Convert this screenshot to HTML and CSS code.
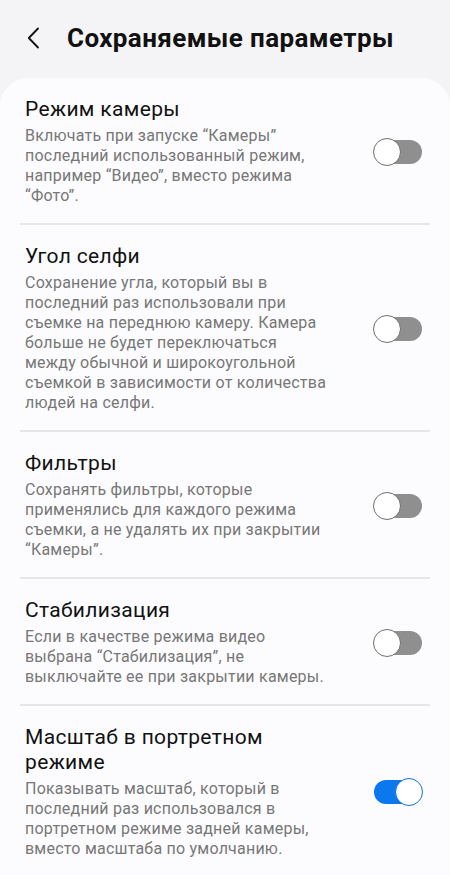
FILE: index.html
```html
<!DOCTYPE html>
<html lang="ru">
<head>
<meta charset="utf-8">
<link rel="stylesheet" href="styles.css">
</head>
<body>
<header class="topbar">
  <svg class="back" width="16" height="24" viewBox="0 0 16 24"><path d="M12 2.5 L2.8 12 L12 21.5" fill="none" stroke="#111" stroke-width="1.8" stroke-linecap="round" stroke-linejoin="round"/></svg>
  <h1 class="title">Сохраняемые параметры</h1>
</header>
<main class="card">
  <div class="item">
    <div class="text">
      <div class="name">Режим камеры</div>
      <div class="desc">Включать при запуске “Камеры” последний использованный режим, например “Видео”, вместо режима “Фото”.</div>
    </div>
    <span class="switch"><span class="thumb"></span></span>
  </div>
  <div class="item">
    <div class="text">
      <div class="name">Угол селфи</div>
      <div class="desc">Сохранение угла, который вы в последний раз использовали при съемке на переднюю камеру. Камера больше не будет переключаться<br>между обычной и широкоугольной съемкой в зависимости от количества людей на селфи.</div>
    </div>
    <span class="switch"><span class="thumb"></span></span>
  </div>
  <div class="item">
    <div class="text">
      <div class="name">Фильтры</div>
      <div class="desc">Сохранять фильтры, которые применялись для каждого режима съемки, а не удалять их при закрытии “Камеры”.</div>
    </div>
    <span class="switch"><span class="thumb"></span></span>
  </div>
  <div class="item">
    <div class="text">
      <div class="name">Стабилизация</div>
      <div class="desc">Если в качестве режима видео выбрана “Стабилизация”, не выключайте ее при закрытии камеры.</div>
    </div>
    <span class="switch"><span class="thumb"></span></span>
  </div>
  <div class="item">
    <div class="text">
      <div class="name">Масштаб в портретном режиме</div>
      <div class="desc">Показывать масштаб, который в последний раз использовался в портретном режиме задней камеры, вместо масштаба по умолчанию.</div>
    </div>
    <span class="switch on"><span class="thumb"></span></span>
  </div>
</main>
</body>
</html>
```
FILE: styles.css
```css
* { box-sizing: border-box; }
html, body { margin: 0; padding: 0; }
body {
  background: #f4f3f5;
  font-family: Roboto, "Noto Sans", sans-serif;
  color: #111;
  width: 450px;
  height: 875px;
  overflow: hidden;
}
.topbar {
  height: 78px;
  display: flex;
  align-items: center;
  padding: 0 0 2px 26px;
}
.back { flex: none; }
.title {
  margin: 0 0 0 25px;
  font-size: 26px;
  font-weight: 700;
  letter-spacing: 0.4px;
  color: #111;
}
.card {
  background: #fcfcfe;
  border-radius: 28px 28px 0 0;
  padding: 0 20px;
  min-height: 797px;
}
.item {
  display: flex;
  align-items: center;
  padding: 19px 0 17px 5px;
  border-bottom: 2px solid #e6e6e8;
}
.item:last-child { border-bottom: none; }
.text { flex: 1; max-width: 312px; }
.name {
  font-size: 21px;
  line-height: 25px;
  letter-spacing: 0.35px;
  color: #111;
}
.item:last-child .name { max-width: 260px; }
.desc {
  margin-top: 4px;
  font-size: 16px;
  line-height: 20px;
  letter-spacing: 0.22px;
  color: #777;
}
.switch {
  margin-left: auto;
  margin-right: 8px;
  position: relative;
  width: 48px;
  height: 24px;
  border-radius: 12px;
  background: #8f8f8f;
  flex: none;
}
.thumb {
  position: absolute;
  left: -1px;
  top: -2px;
  width: 28px;
  height: 28px;
  border-radius: 50%;
  background: #fff;
  border: 1.5px solid #6f6f6f;
}
.switch.on { background: #0b78f0; }
.switch.on .thumb {
  left: auto;
  right: -1px;
  border-color: #1a6fd6;
}
```
